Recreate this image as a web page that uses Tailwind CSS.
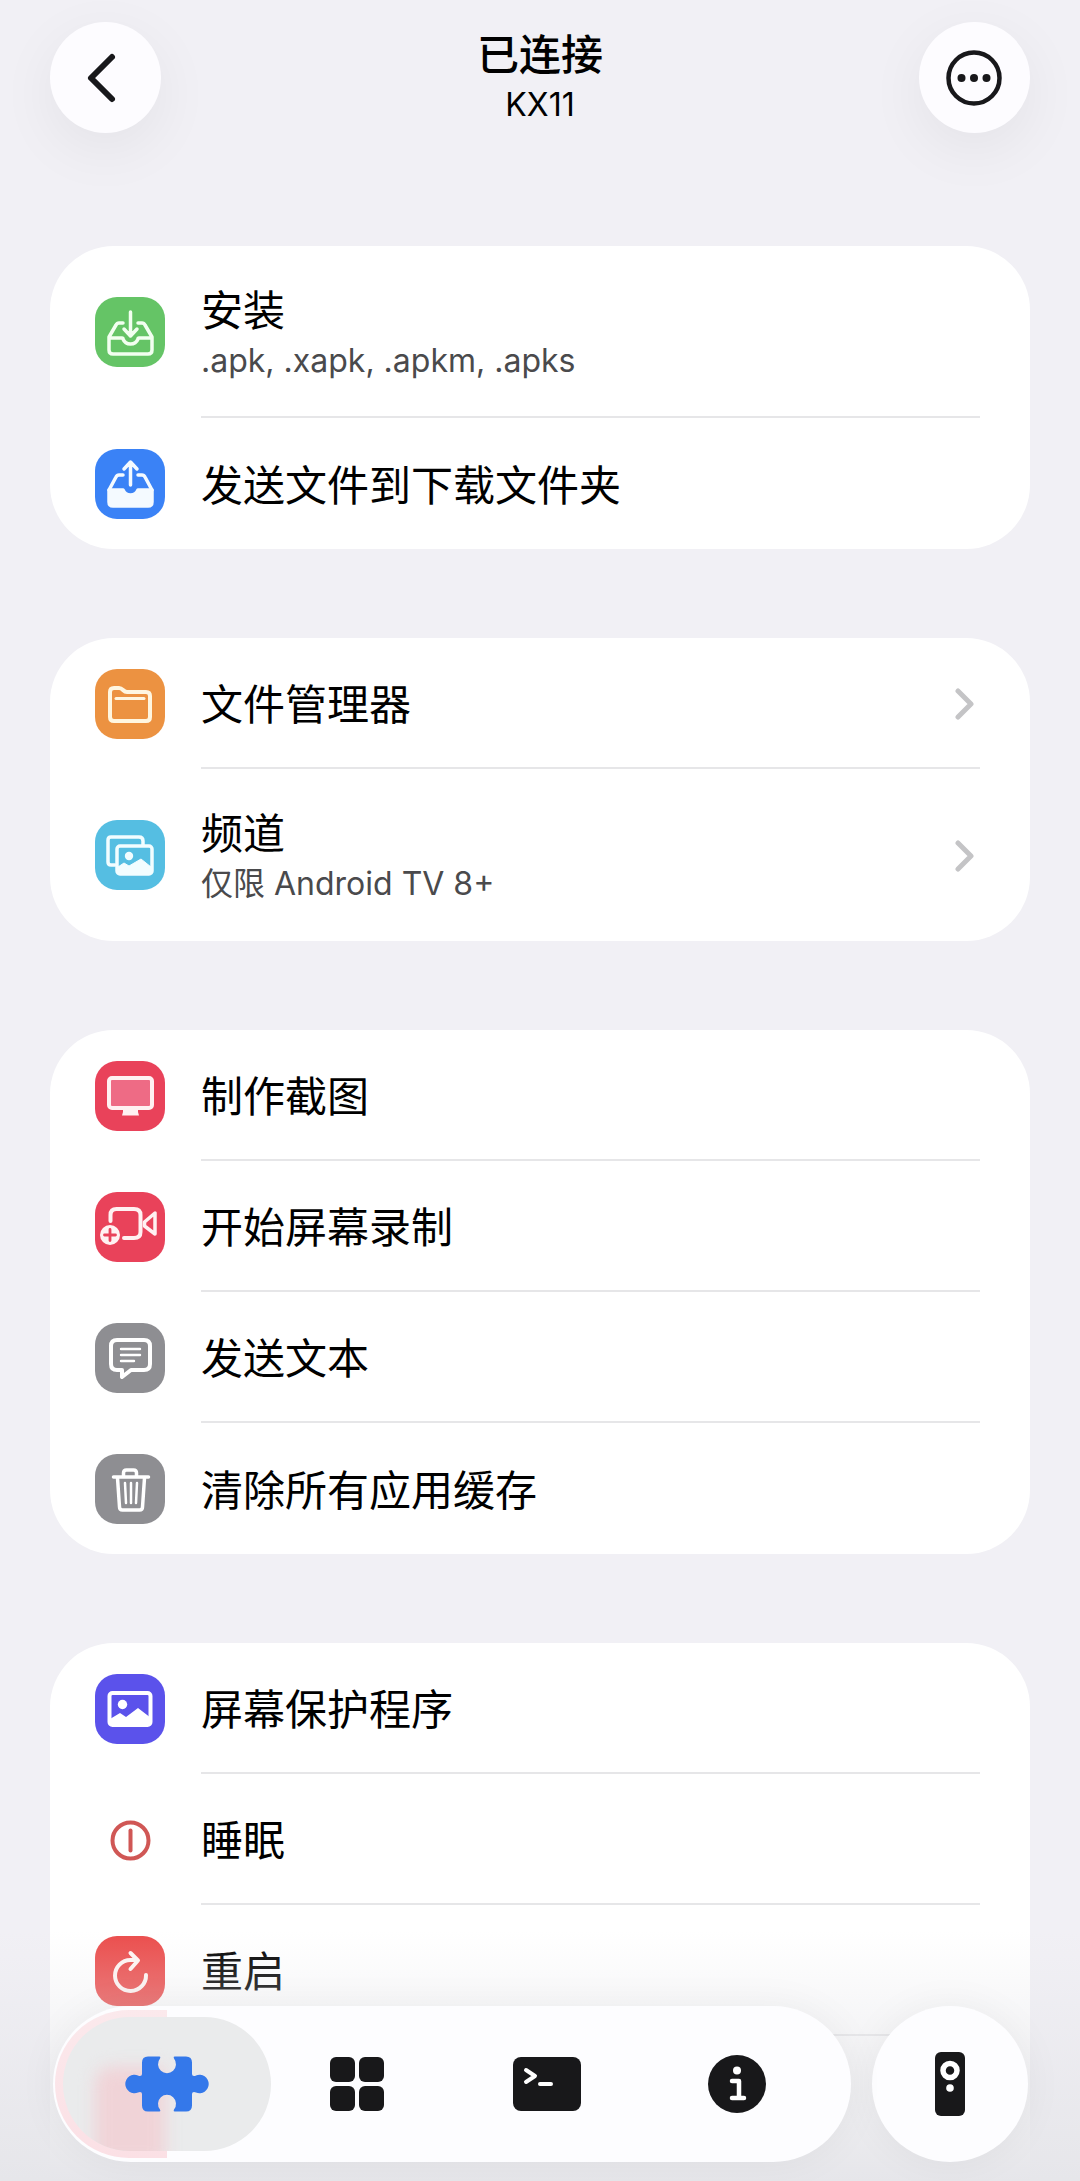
<!DOCTYPE html>
<html lang="zh-CN">
<head>
<meta charset="utf-8">
<meta name="viewport" content="width=device-width, initial-scale=1">
<title>已连接 KX11</title>
<script src="https://cdn.jsdelivr.net/npm/@tailwindcss/browser@4"></script>
</head>
<body class="bg-[#f1f0f5] text-black font-['Inter','Noto_Sans_CJK_SC',sans-serif]">
<div class="relative flex h-screen flex-col overflow-hidden">

  <header class="flex shrink-0 items-start justify-between px-[50px] pt-[22px]">
    <button aria-label="返回" class="flex size-[111px] items-center justify-center rounded-full bg-[#fdfcff] shadow-[0_16px_60px_rgba(0,0,0,0.06)]">
      <svg class="size-14" viewBox="0 0 56 56" fill="none" stroke="#18181b" stroke-width="6" stroke-linecap="round" stroke-linejoin="round"><path d="M34 7 L13 28 L34 49"/></svg>
    </button>
    <div class="flex flex-col items-center pt-1.5">
      <h1 class="text-[42px] leading-[54px] font-medium">已连接</h1>
      <p class="text-[32px] leading-[46px]">KX11</p>
    </div>
    <button aria-label="更多" class="flex size-[111px] items-center justify-center rounded-full bg-[#fdfcff] shadow-[0_16px_60px_rgba(0,0,0,0.06)]">
      <svg class="size-14" viewBox="0 0 56 56" fill="none"><circle cx="28" cy="28" r="25.500" stroke="#18181b" stroke-width="4.500"/><g fill="#18181b"><circle cx="15.500" cy="28" r="4"/><circle cx="28" cy="28" r="4"/><circle cx="40.500" cy="28" r="4"/></g></svg>
    </button>
  </header>

  <main class="flex min-h-0 flex-1 flex-col gap-[89px] overflow-y-auto px-[50px] pt-[113px] [scrollbar-width:none]">
    <section class="shrink-0 rounded-[64px] bg-white pr-[50px] pl-[45px]">
      <button class="flex h-[172px] w-full items-center gap-9 text-left">
        <svg class="size-[70px] shrink-0 rounded-[22px] bg-[#65c466]" viewBox="0 0 70 70" fill="none" stroke="#f2fff0" stroke-width="3.500" stroke-linecap="round" stroke-linejoin="round"><path d="M28 26H24Q22 26 21 28L14 40V53Q14 57 18 57H53Q57 57 57 53V40L50 28Q49 26 47 26H43M14 41H27Q28 41 28 42Q30 47 35.500 47T43 42Q43 41 44 41H57M35.500 15V38M29 32L35.500 39L42 32"/></svg>
        <span class="flex h-full flex-1 flex-col justify-center border-b-2 border-[#e6e6e8] pt-1.5"><span class="text-[42px] leading-[54px]">安装</span><span class="text-[32px] leading-[46px] text-[#4a4a4c]">.apk, .xapk, .apkm, .apks</span></span>
      </button>
      <button class="flex h-[131px] w-full items-center gap-9 text-left">
        <svg class="size-[70px] shrink-0 rounded-[22px] bg-[#3a82f6]" viewBox="0 0 70 70" fill="none" stroke="#f4faff" stroke-width="3.500" stroke-linecap="round" stroke-linejoin="round"><path d="M28 26H24Q22 26 21 28L14 41M57 41L50 28Q49 26 47 26H43M35.500 36V14M29 20L35.500 13L42 20"/><path fill="#f4faff" d="M14 41H28Q30 46 35.500 46T43 41H57V53Q57 57 53 57H18Q14 57 14 53Z"/></svg>
        <span class="flex-1 pt-1 text-[42px] leading-[54px]">发送文件到下载文件夹</span>
      </button>
    </section>

    <section class="shrink-0 rounded-[64px] bg-white pr-[50px] pl-[45px]">
      <button class="flex h-[131px] w-full items-center gap-9 text-left">
        <svg class="size-[70px] shrink-0 rounded-[22px] bg-[#ec9241]" viewBox="0 0 70 70" fill="none" stroke="#fff6e0" stroke-width="4" stroke-linecap="round" stroke-linejoin="round"><path d="M15 23Q15 19 19 19H24Q26 19 28 21T32 23H51Q55 23 55 27V48Q55 52 51 52H19Q15 52 15 48Z"/><path stroke-width="3" d="M21 29.500H49"/></svg>
        <span class="flex h-full flex-1 items-center justify-between border-b-2 border-[#e6e6e8]"><span class="pt-1 text-[42px] leading-[54px]">文件管理器</span>
        <svg class="mr-1 h-[34px] w-[22px]" viewBox="0 0 22 34" fill="none" stroke="#c4c4c6" stroke-width="5" stroke-linecap="round" stroke-linejoin="round"><path d="M4 5L17 18L4 31"/></svg></span>
      </button>
      <button class="flex h-[172px] w-full items-center gap-9 text-left">
        <svg class="size-[70px] shrink-0 rounded-[22px] bg-[#55bee2]" viewBox="0 0 70 70" fill="none" stroke="#f2fdff" stroke-width="3.500" stroke-linecap="round" stroke-linejoin="round"><path d="M20 45H16Q13 45 13 42V20Q13 17 16 17H44Q48 17 48 21V25"/><rect x="22" y="26" width="35" height="28" rx="3"/><circle cx="34" cy="36" r="4.200" fill="#f2fdff" stroke="none"/><path fill="#f2fdff" stroke-width="1" d="M23 47L29 43L34 46L46 39L56 47V54H23Z"/></svg>
        <span class="flex flex-1 items-center justify-between"><span class="flex flex-col pt-1"><span class="text-[42px] leading-[54px]">频道</span><span class="text-[32px] leading-[46px] text-[#4a4a4c]">仅限 Android TV 8+</span></span>
        <svg class="mr-1 h-[34px] w-[22px]" viewBox="0 0 22 34" fill="none" stroke="#c4c4c6" stroke-width="5" stroke-linecap="round" stroke-linejoin="round"><path d="M4 5L17 18L4 31"/></svg></span>
      </button>
    </section>

    <section class="shrink-0 rounded-[64px] bg-white pr-[50px] pl-[45px]">
      <button class="flex h-[131px] w-full items-center gap-9 text-left">
        <svg class="size-[70px] shrink-0 rounded-[22px] bg-[#e9425a]" viewBox="0 0 70 70"><rect x="14" y="17" width="43" height="30" rx="3" fill="#ee6b85" stroke="#fff1f2" stroke-width="4"/><path fill="#fff1f2" d="M28 48H43V51L44 54.500H27L28 51Z"/></svg>
        <span class="flex h-full flex-1 items-center border-b-2 border-[#e6e6e8] pt-1 text-[42px] leading-[54px]">制作截图</span>
      </button>
      <button class="flex h-[131px] w-full items-center gap-9 text-left">
        <svg class="size-[70px] shrink-0 rounded-[22px] bg-[#e9425a]" viewBox="0 0 70 70" fill="none" stroke="#fff1f2" stroke-width="4" stroke-linecap="round" stroke-linejoin="round"><path d="M15.500 29V23Q15.500 17 21.500 17H39Q45.500 17 45.500 23V40Q45.500 46 39 46H29"/><path stroke-width="3.500" d="M49.500 30L60 21V42L49.500 34Z"/><circle cx="15" cy="43" r="10" fill="#fff1f2" stroke="none"/><path stroke="#e9425a" stroke-width="2.800" d="M9.500 43H20.500M15 37.500V48.500"/></svg>
        <span class="flex h-full flex-1 items-center border-b-2 border-[#e6e6e8] pt-1 text-[42px] leading-[54px]">开始屏幕录制</span>
      </button>
      <button class="flex h-[131px] w-full items-center gap-9 text-left">
        <svg class="size-[70px] shrink-0 rounded-[22px] bg-[#8e8e92]" viewBox="0 0 70 70" fill="none" stroke="#fff" stroke-width="4" stroke-linecap="round" stroke-linejoin="round"><path d="M22 17H49Q55 17 55 23V41Q55 47 49 47H36L27 54V47H22Q16 47 16 41V23Q16 17 22 17Z"/><path stroke-width="2.400" d="M26 26H45M26 32H45M26 38H39"/></svg>
        <span class="flex h-full flex-1 items-center border-b-2 border-[#e6e6e8] pt-1 text-[42px] leading-[54px]">发送文本</span>
      </button>
      <button class="flex h-[131px] w-full items-center gap-9 text-left">
        <svg class="size-[70px] shrink-0 rounded-[22px] bg-[#8e8e92]" viewBox="0 0 70 70" fill="none" stroke="#fff" stroke-width="3.500" stroke-linecap="round" stroke-linejoin="round"><path d="M18.500 23H53.500M22.500 24L24.500 53Q24.500 56 27.500 56H44.500Q47.500 56 47.500 53L49.500 24M28.500 22V19Q28.500 16 31.500 16H38.500Q41.500 16 41.500 19V22"/><path stroke-width="2.500" d="M30 29L31 49M36 29V49M42 29L41 49"/></svg>
        <span class="flex-1 pt-1 text-[42px] leading-[54px]">清除所有应用缓存</span>
      </button>
    </section>

    <section class="shrink-0 rounded-t-[64px] bg-white pr-[50px] pb-[160px] pl-[45px]">
      <button class="flex h-[131px] w-full items-center gap-9 text-left">
        <svg class="size-[70px] shrink-0 rounded-[22px] bg-[#5b52eb]" viewBox="0 0 70 70"><rect x="14.500" y="19" width="41" height="32" rx="3" fill="none" stroke="#fff" stroke-width="4"/><circle cx="27.500" cy="30.500" r="4.700" fill="#fff"/><path fill="#fff" d="M15 45L25 39L31 43L43 34L56 44V51H15Z"/></svg>
        <span class="flex h-full flex-1 items-center border-b-2 border-[#e6e6e8] pt-1 text-[42px] leading-[54px]">屏幕保护程序</span>
      </button>
      <button class="flex h-[131px] w-full items-center gap-9 text-left">
        <svg class="size-[70px] shrink-0" viewBox="0 0 70 70" fill="none" stroke="#d05755" stroke-width="4" stroke-linecap="round"><circle cx="35.500" cy="35.500" r="18"/><path d="M35.500 25.500V45.500"/></svg>
        <span class="flex h-full flex-1 items-center border-b-2 border-[#e6e6e8] pt-1 text-[42px] leading-[54px]">睡眠</span>
      </button>
      <button class="flex h-[131px] w-full items-center gap-9 text-left">
        <svg class="size-[70px] shrink-0 rounded-[22px] bg-[#eb4d4c]" viewBox="0 0 70 70" fill="none" stroke="#fff5f3" stroke-width="4" stroke-linecap="round" stroke-linejoin="round"><path d="M51 39A15.500 15.500 0 1 1 35.500 24H42M35.500 17L43 24.500L35.500 33"/></svg>
        <span class="flex h-full flex-1 items-center border-b-2 border-[#e6e6e8] pt-1 text-[42px] leading-[54px]">重启</span>
      </button>
    </section>
  </main>

  <div class="pointer-events-none absolute inset-x-0 bottom-0 h-[250px] bg-linear-to-b from-[#e6e6ea]/0 via-[#e6e6ea]/50 to-[#e6e6ea]"></div>

  <nav aria-label="主导航" class="absolute inset-x-0 bottom-[19px] flex gap-[21px] pr-[52px] pl-[53px]">
    <div class="relative flex h-[156px] flex-1 overflow-hidden rounded-full bg-[#fdfdff] px-[19px] shadow-[0_0_40px_rgba(0,0,0,0.05)]">
      <div class="absolute inset-y-1 left-0.5 w-28 rounded-l-full bg-linear-to-b from-[#fbe9ec] to-[#fbe0e5]"></div>
      <div class="absolute top-[11px] left-[10px] h-[134px] w-[208px] overflow-hidden rounded-full bg-[#eaebec]">
        <div class="absolute top-[50px] left-8 h-24 w-[70px] rounded-tl-2xl bg-[#f0d3d7] blur-sm"></div>
      </div>
      <a href="#tools" aria-label="工具" aria-current="page" class="relative flex flex-1 items-center justify-center">
        <svg class="h-14 w-[84px]" viewBox="0 0 84 56" fill="#3478ea"><path d="M23 .500H34.500Q36 .500 35 2.500A9 9 0 1 0 49 2.500Q48 .500 49.500 .500H61Q67 .500 67 6.500V18Q67 20 69 20Q70 20 71 19.500A9.200 9.200 0 1 1 71 36.500Q70 36 69 36Q67 36 67 38V49.500Q67 55.500 61 55.500H49.500Q48 55.500 49 53.500A9 9 0 1 0 35 53.500Q36 55.500 34.500 55.500H23Q17 55.500 17 49.500V38Q17 36 15 36Q14 36 13 36.500A9.200 9.200 0 1 1 13 19.500Q14 20 15 20Q17 20 17 18V6.500Q17 .500 23 .500Z"/></svg>
      </a>
      <a href="#apps" aria-label="应用" class="relative flex flex-1 items-center justify-center">
        <svg class="size-[54px]" viewBox="0 0 54 54" fill="#18181a"><rect x="0" y="0" width="25" height="25" rx="6"/><rect x="29" y="0" width="25" height="25" rx="6"/><rect x="0" y="29" width="25" height="25" rx="6"/><rect x="29" y="29" width="25" height="25" rx="6"/></svg>
      </a>
      <a href="#terminal" aria-label="终端" class="relative flex flex-1 items-center justify-center">
        <svg class="h-[54px] w-[68px]" viewBox="0 0 68 54"><rect width="68" height="54" rx="8" fill="#18181a"/><path d="M13 13L22 19L13 25M27 27H38" fill="none" stroke="#fff" stroke-width="4" stroke-linecap="round" stroke-linejoin="round"/></svg>
      </a>
      <a href="#info" aria-label="信息" class="relative flex flex-1 items-center justify-center">
        <svg class="size-[58px]" viewBox="0 0 58 58"><circle cx="29" cy="29" r="29" fill="#18181a"/><circle cx="29" cy="15.500" r="4" fill="#fff"/><path d="M24 26H31V43M24 43H36" fill="none" stroke="#fff" stroke-width="4.500" stroke-linecap="round" stroke-linejoin="round"/></svg>
      </a>
    </div>
    <button aria-label="遥控器" class="flex size-[156px] items-center justify-center rounded-full bg-[#fdfdff] shadow-[0_0_40px_rgba(0,0,0,0.05)]">
      <svg class="h-16 w-[30px]" viewBox="0 0 30 64"><rect width="30" height="64" rx="6" fill="#18181a"/><circle cx="15" cy="18.500" r="7" fill="none" stroke="#fff" stroke-width="5.500"/><circle cx="15" cy="36" r="3.800" fill="#fff"/></svg>
    </button>
  </nav>
</div>
</body>
</html>
